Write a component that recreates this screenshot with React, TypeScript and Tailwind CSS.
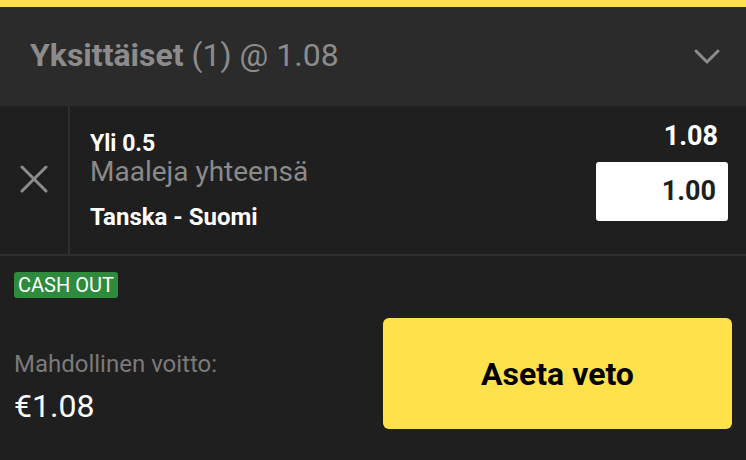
import React from 'react';

const font = { fontFamily: 'Roboto, "Noto Sans", sans-serif' };

function Chevron() {
  return (
    <svg width="26" height="16" viewBox="0 0 26 16" fill="none">
      <path d="M2 2 L13 13 L24 2" stroke="#8c8c8c" strokeWidth="3" strokeLinecap="round" strokeLinejoin="round" />
    </svg>
  );
}

function Cross() {
  return (
    <svg width="28" height="28" viewBox="0 0 28 28" fill="none">
      <path d="M2 2 L26 26 M26 2 L2 26" stroke="#8c8c8c" strokeWidth="3" strokeLinecap="round" />
    </svg>
  );
}

export default function App() {
  return (
    <div className="w-[746px] h-[460px] bg-[#1f1f1f] overflow-hidden flex flex-col" style={font}>
      <div className="h-[7px] bg-[#ffe14b]" />

      {/* header */}
      <div className="h-[99px] bg-[#2b2b2b] flex items-center justify-between pl-[30px] pr-[26px]">
        <div className="text-[32px] leading-none text-[#8c8c8c] pb-[3px]">
          <span className="font-bold">Yksittäiset</span> (1) @ 1.08
        </div>
        <Chevron />
      </div>

      {/* selection */}
      <div className="h-[150px] flex border-b-2 border-[#2e2e2e]">
        <div className="w-[70px] border-r-2 border-[#2e2e2e] flex items-center justify-center pb-[2px]">
          <Cross />
        </div>
        <div className="flex-1 flex justify-between pl-[20px] pr-[18px]">
          <div className="flex flex-col pt-[25px]">
            <div className="text-[23px] leading-[26px] font-bold text-white">Yli 0.5</div>
            <div className="text-[28px] leading-[30px] text-[#8a8a8a]">Maaleja yhteensä</div>
            <div className="text-[24px] leading-[26px] mt-[17px] font-bold text-white">Tanska - Suomi</div>
          </div>
          <div className="flex flex-col items-end pt-[15px]">
            <div className="text-[27px] leading-[30px] font-bold text-white pr-[10px]">1.08</div>
            <div className="mt-[11px] w-[132px] h-[59px] bg-white rounded-[3px] flex items-center justify-end pr-[12px]">
              <span className="text-[27px] leading-none font-bold text-[#1f1f1f]">1.00</span>
            </div>
          </div>
        </div>
      </div>

      {/* footer */}
      <div className="flex-1 flex flex-col px-[14px] pt-[16px]">
        <div className="self-start h-[26px] px-[4px] rounded-[3px] bg-[#2e8b3e] text-white text-[20px] leading-[26px]">
          CASH OUT
        </div>
        <div className="mt-[20px] flex justify-between items-end">
          <div className="flex flex-col pb-[5px]">
            <div className="text-[24px] leading-[28px] text-[#7a7a7a]">Mahdollinen voitto:</div>
            <div className="text-[32px] leading-[36px] mt-[10px] text-white">€1.08</div>
          </div>
          <button className="w-[349px] h-[111px] rounded-[6px] bg-[#ffe14b] text-black text-[32px] font-bold">
            Aseta veto
          </button>
        </div>
      </div>
    </div>
  );
}
